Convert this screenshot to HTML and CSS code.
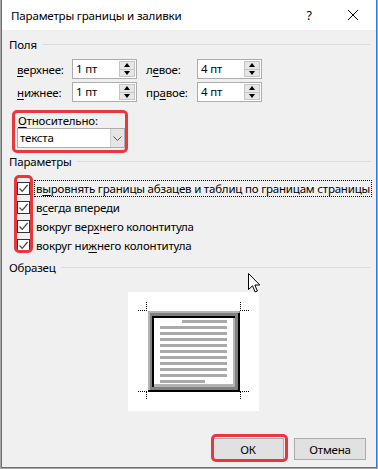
FILE: index.html
```html
<!DOCTYPE html>
<html lang="ru">
<head>
<meta charset="utf-8">
<title>Параметры границы и заливки</title>
<link rel="stylesheet" href="styles.css">
</head>
<body>
<div class="window">
  <div class="titlebar">
    <span class="title">Параметры границы и заливки</span>
    <span class="help">?</span>
    <span class="close"><svg width="12" height="12" viewBox="0 0 12 12"><path d="M1 1 L11 11 M11 1 L1 11" stroke="#000" stroke-width="1" fill="none"/></svg></span>
  </div>
  <div class="content">
    <div class="group"><span>Поля</span><span class="rule"></span></div>
    <div class="fields">
      <span class="flabel"><u>в</u>ерхнее:</span>
      <div class="spin"><span class="spin-val">1 пт</span><span class="spin-btns"><span class="sb up"></span><span class="sb down"></span></span></div>
      <span class="flabel pad">л<u>е</u>вое:</span>
      <div class="spin"><span class="spin-val">4 пт</span><span class="spin-btns"><span class="sb up"></span><span class="sb down"></span></span></div>
      <span class="flabel"><u>н</u>ижнее:</span>
      <div class="spin"><span class="spin-val">1 пт</span><span class="spin-btns"><span class="sb up"></span><span class="sb down"></span></span></div>
      <span class="flabel pad">пр<u>а</u>вое:</span>
      <div class="spin"><span class="spin-val">4 пт</span><span class="spin-btns"><span class="sb up"></span><span class="sb down"></span></span></div>
    </div>
    <div class="relative">
      <div class="rlabel"><u>О</u>тносительно:</div>
      <div class="select"><span class="sel-val">текста</span><span class="sel-arrow"><svg width="9" height="5" viewBox="0 0 9 5"><path d="M0.5 0.5 L4.5 4.5 L8.5 0.5" stroke="#555" fill="none"/></svg></span></div>
    </div>
    <div class="group g2"><span>Параметры</span><span class="rule"></span></div>
    <div class="checks">
      <div class="check"><span class="box"><svg width="11" height="11" viewBox="0 0 11 11"><path d="M1.5 5.5 L4.2 8.3 L9.6 2" stroke="#444" stroke-width="1.2" fill="none"/></svg></span><span class="ctext focus">в<u>ы</u>ровнять границы абзацев и таблиц по границам страницы</span></div>
      <div class="check"><span class="box"><svg width="11" height="11" viewBox="0 0 11 11"><path d="M1.5 5.5 L4.2 8.3 L9.6 2" stroke="#444" stroke-width="1.2" fill="none"/></svg></span><span class="ctext">в<u>с</u>егда впереди</span></div>
      <div class="check"><span class="box"><svg width="11" height="11" viewBox="0 0 11 11"><path d="M1.5 5.5 L4.2 8.3 L9.6 2" stroke="#444" stroke-width="1.2" fill="none"/></svg></span><span class="ctext">вокруг вер<u>х</u>него колонтитула</span></div>
      <div class="check"><span class="box"><svg width="11" height="11" viewBox="0 0 11 11"><path d="M1.5 5.5 L4.2 8.3 L9.6 2" stroke="#444" stroke-width="1.2" fill="none"/></svg></span><span class="ctext">вокруг ни<u>ж</u>него колонтитула</span></div>
    </div>
    <div class="group g3"><span>Образец</span><span class="rule"></span></div>
    <div class="preview">
      <svg width="131" height="119" viewBox="0 0 131 119">
        <rect x="0" y="0" width="131" height="119" fill="#fff"/>
        <g stroke="#000" stroke-width="1" stroke-dasharray="1 1" fill="none">
          <path d="M10 18.5 H20 M18.5 10 V18"/>
          <path d="M112 18.5 H121 M112.5 10 V18"/>
          <path d="M10 99.5 H20 M18.5 100 V108"/>
          <path d="M112 99.5 H121 M112.5 100 V108"/>
        </g>
        <rect x="20" y="19" width="92" height="81" fill="#808080"/>
        <rect x="20" y="19" width="91" height="2" fill="#b4b4b4"/>
        <rect x="20" y="19" width="2" height="79" fill="#b4b4b4"/>
        <rect x="20" y="98" width="92" height="2" fill="#000"/>
        <rect x="110" y="21" width="2" height="79" fill="#000"/>
        <rect x="24" y="24" width="83" height="2" fill="#000"/>
        <rect x="24" y="24" width="2" height="71" fill="#000"/>
        <rect x="105" y="26" width="2" height="69" fill="#b4b4b4"/>
        <rect x="26" y="92" width="81" height="3" fill="#b4b4b4"/>
        <rect x="26" y="26" width="79" height="66" fill="#fff"/>
        <g fill="#a9a9a9">
          <rect x="54" y="28" width="45" height="3"/>
          <rect x="32" y="34" width="67" height="3"/>
          <rect x="32" y="40" width="67" height="3"/>
          <rect x="32" y="46" width="67" height="3"/>
          <rect x="32" y="52" width="67" height="3"/>
          <rect x="32" y="58" width="67" height="3"/>
          <rect x="32" y="64" width="67" height="3"/>
          <rect x="32" y="70" width="67" height="3"/>
          <rect x="32" y="76" width="67" height="3"/>
          <rect x="32" y="82" width="67" height="3"/>
          <rect x="32" y="88" width="45" height="3"/>
        </g>
      </svg>
    </div>
    <div class="buttons">
      <span class="btn">ОК</span>
      <span class="btn">Отмена</span>
    </div>
  </div>
</div>
<svg class="cursor" width="13" height="20" viewBox="0 0 13 20"><path d="M0.5 0.5 L0.5 16.5 L4.5 12.8 L7.2 19 L9.4 18 L6.8 12 L11.8 12 Z" fill="#fff" stroke="#000" stroke-width="1" stroke-linejoin="miter"/></svg>
<div class="mark m1"></div>
<div class="mark m2"></div>
<div class="mark m3"></div>
</body>
</html>
```

FILE: styles.css
```css
* { box-sizing: border-box; }
html, body { margin: 0; padding: 0; }
body {
  width: 378px;
  height: 469px;
  background: #a8a8a8;
  font-family: "Noto Sans", "DejaVu Sans", sans-serif;
  font-size: 11.5px;
  letter-spacing: -0.2px;
  color: #000;
  position: relative;
  overflow: hidden;
}
u { text-decoration: underline; text-underline-offset: 2px; text-decoration-thickness: 1px; }

.window {
  margin-left: 1px;
  width: 376px;
  height: 468px;
  border: 1px solid #2e7bcf;
  border-top: none;
  background: #f0f0f0;
  display: flex;
  flex-direction: column;
}
.titlebar {
  height: 30px;
  flex: none;
  background: #fff;
  display: flex;
  align-items: center;
  padding-left: 9px;
}
.title { flex: 1; font-size: 11.6px; }
.help { width: 46px; text-align: center; font-size: 12.5px; padding-left: 4px; }
.close { width: 46px; display: flex; justify-content: center; }

.content { flex: 1; padding: 7px 5px 0 7px; display: flex; flex-direction: column; }

.group { display: flex; align-items: center; gap: 5px; line-height: 15px; }
.rule { flex: 1; height: 1px; background: #dcdcdc; }
.g2 { margin-top: 6px; }
.g3 { margin-top: 5px; }

.fields {
  display: grid;
  grid-template-columns: 55px 65px 60px 65px;
  row-gap: 3px;
  align-items: center;
  margin: 7px 0 0 8px;
}
.flabel.pad { padding-left: 9px; }
.spin {
  height: 20px;
  border: 1px solid #acacac;
  background: #fff;
  display: flex;
  padding: 1px;
}
.spin-val { flex: 1; padding-left: 2px; line-height: 16px; }
.spin-btns { width: 16px; display: flex; flex-direction: column; }
.sb {
  flex: 1;
  background: #e6e6e6;
  border: 1px solid #c4c4c4;
  display: flex;
  align-items: center;
  justify-content: center;
}
.sb.down { border-top: none; }
.sb::after { content: ""; width: 0; height: 0; border-left: 3.5px solid transparent; border-right: 3.5px solid transparent; }
.sb.up::after { border-bottom: 4px solid #000; }
.sb.down::after { border-top: 4px solid #000; }

.relative { margin: 12px 0 0 8px; width: 108px; }
.rlabel { line-height: 13px; padding-left: 1px; }
.select {
  margin-top: 1px;
  height: 20px;
  border: 1px solid #acacac;
  background: #fff;
  display: flex;
}
.sel-val { flex: 1; padding-left: 2px; line-height: 18px; }
.sel-arrow {
  width: 14px;
  background: #e5e5e5;
  border-left: 1px solid #cfcfcf;
  display: flex;
  align-items: center;
  justify-content: center;
}

.checks { margin: 10px 0 0 8px; display: flex; flex-direction: column; }
.check { height: 19px; display: flex; align-items: center; gap: 5px; }
.box {
  width: 13px; height: 13px;
  border: 1px solid #333;
  background: #fff;
  display: flex; align-items: center; justify-content: center;
}
.ctext { line-height: 15px; padding: 0 1px; white-space: nowrap; }
.focus { outline: 1px dotted #000; outline-offset: 0; }

.preview { margin: 17px 0 0 119px; width: 131px; height: 119px; }
.preview svg { display: block; }

.buttons { margin-top: 27px; display: flex; justify-content: flex-end; gap: 10px; padding-right: 5px; }
.btn {
  width: 72px; height: 22px;
  background: #e1e1e1;
  border: 1px solid #adadad;
  display: flex; align-items: center; justify-content: center;
}

.cursor { position: absolute; left: 248px; top: 273px; }

.mark { position: absolute; border: 3px solid #e8383e; border-radius: 5px; }
.m1 { left: 12px; top: 110px; width: 116px; height: 43px; }
.m2 { left: 14px; top: 175px; width: 19px; height: 78px; }
.m3 { left: 211px; top: 434px; width: 77px; height: 28px; }
```
